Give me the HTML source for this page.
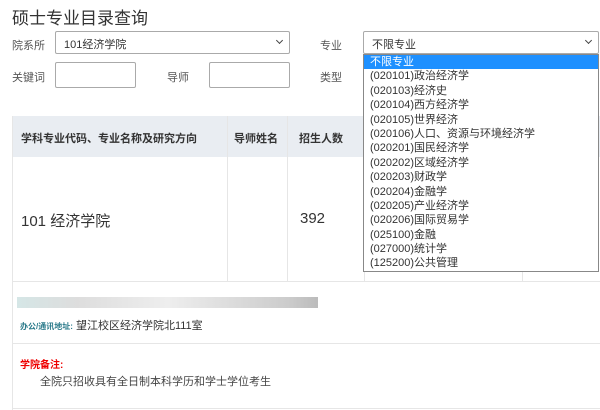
<!DOCTYPE html>
<html><head><meta charset="utf-8"><style>
*{margin:0;padding:0;box-sizing:border-box}
body{width:600px;height:410px;overflow:hidden;background:#fff;font-family:"Liberation Sans","Noto Sans CJK SC",sans-serif;color:#333;position:relative}
.a{position:absolute;white-space:nowrap}
.lbl{font-size:11px;color:#555}
.box{position:absolute;border:1px solid #aaa;border-radius:2px;background:#fff}
.sel{font-size:11px;color:#333;padding:4px 0 0 8px}
.chev{position:absolute;right:7px;top:6px;width:5px;height:5px;border-right:1px solid #444;border-bottom:1px solid #444;transform:rotate(45deg)}
.vl{position:absolute;width:1px;background:#e6e6e6}
.hl{position:absolute;height:1px;background:#e6e6e6}
.dd{position:absolute;left:363px;top:54px;width:236px;height:218px;border:1px solid #888;background:#fff;font-size:11px;color:#333}
.dd div{height:14.4px;line-height:14.4px;padding-left:6px}
</style></head><body>
<div class="a" style="left:12px;top:4px;font-size:17px;color:#333">硕士专业目录查询</div>
<div class="a lbl" style="left:12px;top:37px">院系所</div>
<div class="box sel" style="left:55px;top:31px;width:235px;height:23px">101经济学院<span class="chev"></span></div>
<div class="a lbl" style="left:320px;top:37px">专业</div>
<div class="box sel" style="left:363px;top:31px;width:236px;height:23px">不限专业<span class="chev"></span></div>
<div class="a lbl" style="left:12px;top:69px">关键词</div>
<div class="box" style="left:55px;top:62px;width:81px;height:26px"></div>
<div class="a lbl" style="left:167px;top:69px">导师</div>
<div class="box" style="left:209px;top:62px;width:81px;height:26px"></div>
<div class="a lbl" style="left:320px;top:69px">类型</div>

<div style="position:absolute;left:12px;top:116px;width:588px;height:41px;background:#e9edf2"></div>
<div class="a" style="left:21px;top:130px;font-size:11px;font-weight:bold;color:#333">学科专业代码、专业名称及研究方向</div>
<div class="a" style="left:234px;top:130px;font-size:11px;font-weight:bold;color:#333">导师姓名</div>
<div class="a" style="left:299px;top:130px;font-size:11px;font-weight:bold;color:#333">招生人数</div>
<div class="vl" style="left:227px;top:116px;height:165px"></div>
<div class="vl" style="left:287px;top:116px;height:165px"></div>
<div class="vl" style="left:364px;top:116px;height:165px"></div>
<div class="vl" style="left:522px;top:116px;height:165px"></div>
<div class="vl" style="left:12px;top:116px;height:294px"></div>
<div class="a" style="left:21px;top:210px;font-size:15px;color:#333">101 经济学院</div>
<div class="a" style="left:300px;top:210px;font-size:15px;color:#333">392</div>
<div class="hl" style="left:12px;top:281px;width:588px"></div>
<div style="position:absolute;left:17px;top:297px;width:301px;height:11px;background:linear-gradient(90deg,#d5e6e6,#ddd 20%,#eee 50%,#ccc 90%,#bbb)"></div>
<div class="a" style="left:20px;top:317px;font-size:11px"><span style="font-size:8px;color:#2a7a8a;font-weight:bold">办公/通讯地址:</span> 望江校区经济学院北111室</div>
<div class="hl" style="left:12px;top:343px;width:588px"></div>
<div class="a" style="left:20px;top:356px;font-size:10px;color:#e00;font-weight:bold">学院备注:</div>
<div class="a" style="left:40px;top:373px;font-size:11px;color:#444">全院只招收具有全日制本科学历和学士学位考生</div>
<div class="hl" style="left:12px;top:408px;width:588px"></div>

<div class="dd">
<div style="background:#1e90ff;color:#fff">不限专业</div>
<div>(020101)政治经济学</div>
<div>(020103)经济史</div>
<div>(020104)西方经济学</div>
<div>(020105)世界经济</div>
<div>(020106)人口、资源与环境经济学</div>
<div>(020201)国民经济学</div>
<div>(020202)区域经济学</div>
<div>(020203)财政学</div>
<div>(020204)金融学</div>
<div>(020205)产业经济学</div>
<div>(020206)国际贸易学</div>
<div>(025100)金融</div>
<div>(027000)统计学</div>
<div>(125200)公共管理</div>
</div>
</body></html>
